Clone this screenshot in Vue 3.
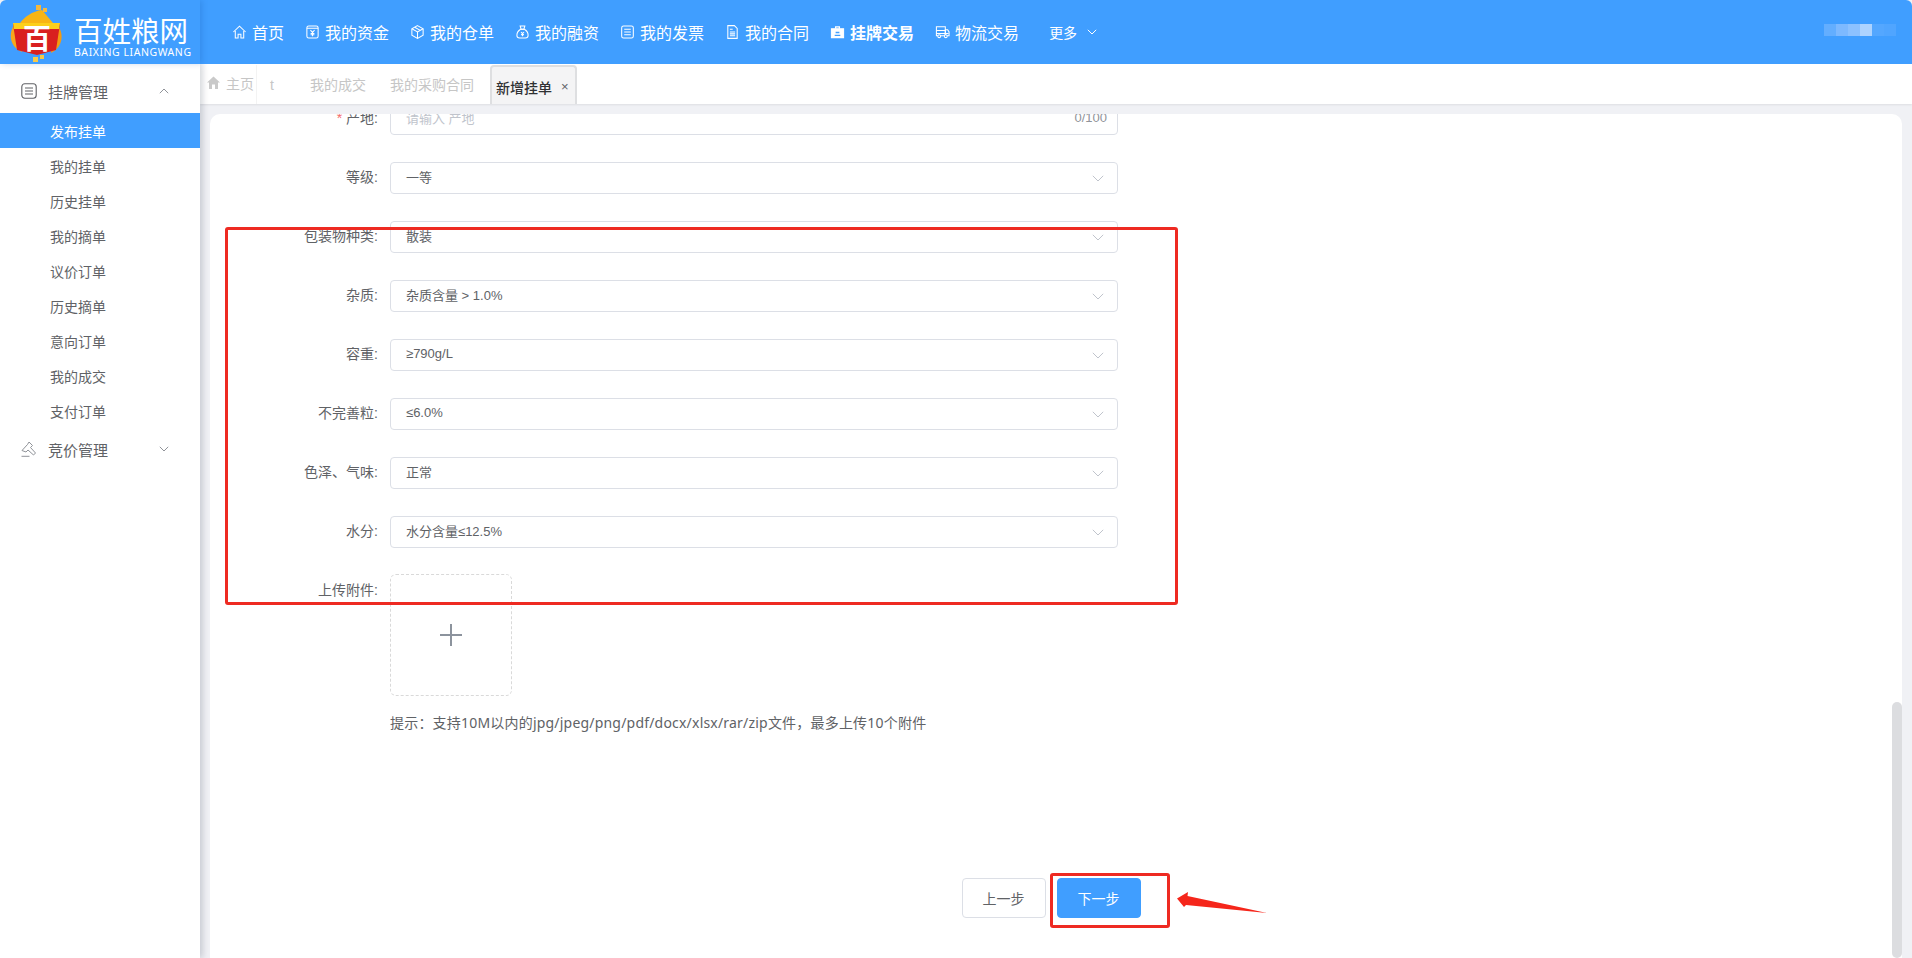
<script setup>
const navItems = [
  { label: '首页', icon: 'home' },
  { label: '我的资金', icon: 'money' },
  { label: '我的仓单', icon: 'cube' },
  { label: '我的融资', icon: 'bag' },
  { label: '我的发票', icon: 'list' },
  { label: '我的合同', icon: 'doc' },
  { label: '挂牌交易', icon: 'badge', active: true },
  { label: '物流交易', icon: 'truck' }
]
const subMenu = ['发布挂单', '我的挂单', '历史挂单', '我的摘单', '议价订单', '历史摘单', '意向订单', '我的成交', '支付订单']
const selects = [
  { label: '等级', value: '一等' },
  { label: '包装物种类', value: '散装' },
  { label: '杂质', value: '杂质含量 > 1.0%' },
  { label: '容重', value: '≥790g/L' },
  { label: '不完善粒', value: '≤6.0%' },
  { label: '色泽、气味', value: '正常' },
  { label: '水分', value: '水分含量≤12.5%' }
]
const mosaic = ['#63aeff', '#7db9ff', '#8cc1ff', '#add3ff', '#54a7ff', '#50a5ff']
</script>

<template>
  <div class="page">
    <header class="topbar">
      <div class="brand">
        <svg class="brand-mark" width="56" height="60" viewBox="0 0 56 60">
          <path d="M5 22C-1 32 1 44 13 49L10 22Z" fill="#f7a81b" />
          <path d="M47 20C56 30 54 44 42 50L46 22Z" fill="#f39a12" />
          <path d="M10 22C14 14 24 8 33 7L44 20Z" fill="#f8b514" />
          <path d="M4 21H51L47 47L28 52L8 47Z" fill="#d9201f" />
          <path d="M4 20H51L50 26H5Z" fill="#fccf1a" />
          <rect x="27" y="2" width="5" height="5" fill="#f5b83d" />
          <rect x="34" y="5" width="4" height="4" fill="#f5b83d" />
          <rect x="24" y="54" width="5" height="5" fill="#f7c948" />
          <rect x="31" y="52" width="4" height="4" fill="#f7c948" />
          <text x="28" y="46" text-anchor="middle" class="mark-glyph">百</text>
        </svg>
        <div class="brand-text">
          <div class="brand-cn">百姓粮网</div>
          <div class="brand-en">BAIXING LIANGWANG</div>
        </div>
      </div>
      <nav class="nav">
        <a v-for="item in navItems" :key="item.label" class="nav-item" :class="{ active: item.active }">
          <svg class="nav-icon" width="15" height="16" viewBox="0 0 16 16" fill="none" stroke="#fff" stroke-width="1.1">
            <template v-if="item.icon === 'home'">
              <path d="M1.500 8 8 1.800 14.500 8" />
              <path d="M3.500 7v7.500h3v-4h3v4h3V7" />
            </template>
            <template v-else-if="item.icon === 'money'">
              <rect x="2" y="1.500" width="12" height="13" rx="2" />
              <path d="M2 4h12M5.800 6 8 8.400 10.200 6M8 8.400V12.500M6 9.500h4M6 11h4" />
            </template>
            <template v-else-if="item.icon === 'cube'">
              <path d="M8 1.200 14 4.500v7L8 14.800 2 11.500v-7Z" />
              <path d="M2 4.500 8 8l6-3.500M8 8v6.800M5 2.900l6 3.400" />
            </template>
            <template v-else-if="item.icon === 'bag'">
              <path d="M5.500 1.500h5L9.500 5h-3Z" />
              <path d="M6 5C3.500 6.500 2 9 2 11.500 2 13.500 3.500 14.500 5 14.500h6c1.500 0 3-1 3-3C14 9 12.500 6.500 10 5Z" />
              <path d="M6.400 8 8 9.800 9.600 8M8 9.800V12.500M6.500 10.800h3" />
            </template>
            <template v-else-if="item.icon === 'list'">
              <rect x="1.800" y="1.500" width="12.400" height="13" rx="2" />
              <path d="M4.500 5h7M4.500 8h7M4.500 11h7" />
            </template>
            <template v-else-if="item.icon === 'doc'">
              <path d="M3 1.200h7l3 3v10.600H3Z" />
              <path d="M5.200 5h3M5.200 8h5.600M5.200 10h5.600M5.200 12h5.600" />
            </template>
            <template v-else-if="item.icon === 'badge'">
              <path d="M1.500 4.500h13v9.500h-13Z" fill="#fff" />
              <path d="M6 4.500V2.500h4v2" stroke-width="1.400" />
              <path d="M5 11.500h6M6 8.500h4" stroke="#409eff" stroke-width="1.400" />
            </template>
            <template v-else>
              <path d="M1.500 2.500h9.500v9.500h-9.500Z" />
              <path d="M11 5.500h2.500l1.500 2.500v4h-4Z" />
              <path d="M1.500 6.500h9.500M1.500 9.500h13" />
              <circle cx="4.500" cy="12.500" r="1.500" fill="#409eff" stroke="#fff" />
              <circle cx="11.500" cy="12.500" r="1.500" fill="#409eff" stroke="#fff" />
            </template>
          </svg>
          <span>{{ item.label }}</span>
        </a>
        <a class="nav-more">
          <span>更多</span>
          <svg width="10" height="6" viewBox="0 0 10 6" fill="none" stroke="#fff"><path d="M.8.800 5 5 9.200.800" /></svg>
        </a>
      </nav>
      <div class="user" aria-hidden="true">
        <i v-for="(c, i) in mosaic" :key="i" class="pixel" :style="{ background: c }"></i>
      </div>
    </header>

    <div class="body">
      <aside class="sidebar">
        <div class="group group-first">
          <svg class="group-icon" width="16" height="16" viewBox="0 0 16 16" fill="none" stroke="#606266" stroke-width="1.100">
            <rect x=".8" y=".8" width="14.400" height="14.400" rx="3" />
            <path d="M4 5h8M4 8h8M4 11h8" />
          </svg>
          <span class="group-label">挂牌管理</span>
          <svg class="chev" width="10" height="6" viewBox="0 0 10 6" fill="none" stroke="#909399"><path d="M.8 5.200 5 1l4.200 4.200" /></svg>
        </div>
        <div v-for="(m, i) in subMenu" :key="m" class="sub" :class="{ current: i === 0 }">{{ m }}</div>
        <div class="group group-last">
          <svg class="group-icon" width="16" height="16" viewBox="0 0 16 16" fill="none" stroke="#909399" stroke-width="1">
            <path d="M1 9.500 6.500 3.500 8 1l3.500 3.500-2 2 5 5.500-2 2-5.500-5-2 2Z" />
            <path d="M.5 15.300h8" />
          </svg>
          <span class="group-label">竞价管理</span>
          <svg class="chev" width="10" height="6" viewBox="0 0 10 6" fill="none" stroke="#909399"><path d="M.8.800 5 5 9.200.800" /></svg>
        </div>
      </aside>

      <main class="main">
        <div class="tabs">
          <div class="tab-home">
            <svg width="13" height="13" viewBox="0 0 13 13" fill="#c9c9c9"><path d="M6.500.5 13 6.500h-2V13H8V8.500H5V13H2V6.500H0Z" /></svg>
            <span>主页</span>
          </div>
          <div class="tab tab-t">t</div>
          <div class="tab tab-a">我的成交</div>
          <div class="tab tab-b">我的采购合同</div>
          <div class="tab-active">
            <span>新增挂单</span>
            <span class="tab-close">×</span>
          </div>
        </div>

        <section class="card">
          <div class="form">
            <div class="row">
              <label class="label"><em>*</em> 产地:</label>
              <div class="field">
                <span class="value placeholder">请输入 产地</span>
                <span class="value count">0/100</span>
              </div>
            </div>
            <div v-for="s in selects" :key="s.label" class="row">
              <label class="label">{{ s.label }}:</label>
              <div class="field">
                <span class="value">{{ s.value }}</span>
                <svg class="select-arrow" width="12" height="7" viewBox="0 0 12 7" fill="none" stroke="#c0c4cc"><path d="M.8.800 6 6l5.200-5.200" /></svg>
              </div>
            </div>
            <div class="row row-upload">
              <label class="label">上传附件:</label>
              <div class="upload">
                <svg width="24" height="24" viewBox="0 0 24 24" stroke="#8c939d" stroke-width="2"><path d="M12 1v22M1 12h22" /></svg>
              </div>
            </div>
            <p class="hint">提示：支持10M以内的jpg/jpeg/png/pdf/docx/xlsx/rar/zip文件，最多上传10个附件</p>
            <div class="actions">
              <button class="btn">上一步</button>
              <button class="btn primary">下一步</button>
            </div>
          </div>
          <div class="scroll-thumb"></div>
        </section>
      </main>
    </div>

    <div class="mark mark-form"></div>
    <div class="mark mark-next"></div>
    <svg class="mark-arrow" width="92" height="24" viewBox="0 0 92 24">
      <path d="M0 7.500 11 1 10.500 5 90 22 9 14 7 16Z" fill="#f5261b" />
    </svg>
  </div>
</template>

<style>
html, body { margin: 0; background: #fff; }
</style>

<style scoped>
.page {
  position: relative;
  width: 1912px;
  height: 958px;
  overflow: hidden;
  display: flex;
  flex-direction: column;
  background: #f0f1f5;
  font-family: "Liberation Sans", "Noto Sans CJK SC", sans-serif;
  color: #606266;
}
.topbar {
  flex: 0 0 64px;
  display: flex;
  align-items: center;
  background: #409eff;
  border-radius: 6px 6px 0 0;
  color: #fff;
  position: relative;
  z-index: 3;
}
.brand {
  width: 200px;
  height: 64px;
  flex: none;
  display: flex;
  align-items: center;
  box-shadow: 2px 0 6px rgba(0, 60, 140, .18);
}
.brand-mark { margin: 2px 7px 0 9px; flex: none; }
.mark-glyph { font: 700 28px "Noto Sans CJK SC", sans-serif; fill: #fff; }
.brand-text { color: #fff; margin-left: 2px; padding-top: 9px; }
.brand-cn { font: 400 28.500px/28px "Noto Sans CJK SC", sans-serif; white-space: nowrap; }
.brand-en { font: 10.500px/12px "Noto Sans", sans-serif; letter-spacing: .55px; white-space: nowrap; margin-top: 2px; }
.nav {
  display: flex;
  align-items: center;
  margin-left: 32px;
  font-size: 16px;
}
.nav-item {
  margin-right: 21px;
  display: flex;
  align-items: center;
  gap: 5px;
  white-space: nowrap;
}
.nav-item.active { font-weight: 700; }
.nav-icon { flex: none; }
.nav-more {
  display: flex;
  align-items: center;
  gap: 10px;
  margin-left: 9px;
  font-size: 14px;
}
.user { display: flex; margin-left: auto; margin-right: 16px; margin-top: -4px; }
.pixel { display: block; width: 12px; height: 12px; }
.body { flex: 1; display: flex; min-height: 0; }
.sidebar {
  width: 200px;
  flex: none;
  background: #fff;
  box-shadow: 3px 0 6px rgba(0, 21, 41, .16);
  position: relative;
  z-index: 2;
  padding-top: 5px;
  box-sizing: border-box;
}
.group {
  height: 44px;
  display: flex;
  align-items: center;
  padding-left: 21px;
  font-size: 15px;
  color: #606266;
}
.group-last { height: 42px; }
.group-icon { flex: none; }
.group-label { margin-left: 11px; }
.chev { margin-left: auto; margin-right: 31px; }
.sub {
  height: 35px;
  line-height: 38px;
  padding-left: 50px;
  font-size: 14px;
  color: #606266;
}
.sub.current { background: #409eff; color: #fff; }
.main { flex: 1; min-width: 0; display: flex; flex-direction: column; }
.tabs {
  flex: 0 0 40px;
  box-sizing: border-box;
  display: flex;
  align-items: flex-end;
  background: #fff;
  font-size: 14px;
  color: #c6c6c6;
  box-shadow: 0 1px 2px rgba(0, 0, 0, .08);
  position: relative;
  z-index: 1;
}
.tab-home {
  width: 57px;
  height: 39px;
  flex: none;
  display: flex;
  align-items: center;
  box-sizing: border-box;
  padding-left: 7px;
  gap: 6px;
  border-right: 1px solid #f3f3f3;
  padding-bottom: 4px;
}
.tab {
  height: 39px;
  line-height: 41px;
  flex: none;
  white-space: nowrap;
  box-sizing: border-box;
}
.tab-t { width: 40px; padding-left: 13px; }
.tab-a { width: 93px; padding-left: 13px; }
.tab-b { width: 100px; }
.tab-active {
  width: 87px;
  height: 39px;
  box-sizing: border-box;
  flex: none;
  display: flex;
  align-items: center;
  padding-left: 4px;
  padding-top: 2px;
  gap: 9px;
  color: #303133;
  font-weight: 500;
  background: #f4f4f5;
  border: 2px solid #dedfe1;
  border-bottom: 0;
  border-radius: 4px 4px 0 0;
  white-space: nowrap;
}
.tab-close { font-size: 13px; color: #606266; font-weight: 400; }
.card {
  position: relative;
  flex: 1;
  min-height: 0;
  margin: 10px 10px 0;
  background: #fff;
  border-radius: 10px 10px 0 0;
  overflow: hidden;
}
.form { margin-top: -11px; width: 1682px; font-size: 13px; }
.row { display: flex; align-items: center; margin-bottom: 27px; }
.row-upload { align-items: flex-start; margin-top: -1px; margin-bottom: 0; }
.label {
  width: 168px;
  margin-right: 12px;
  margin-bottom: 4px;
  flex: none;
  text-align: right;
  color: #606266;
  white-space: nowrap;
  font-size: 14px;
}
.label em { color: #f56c6c; font-style: normal; }
.row-upload .label { line-height: 32px; margin-bottom: 0; }
.field {
  width: 728px;
  height: 32px;
  box-sizing: border-box;
  flex: none;
  display: flex;
  align-items: center;
  justify-content: space-between;
  padding: 0 15px;
  background: #fff;
  border: 1px solid #dcdfe6;
  border-radius: 4px;
  color: #606266;
}
.value { margin-bottom: 3px; }
.placeholder { color: #c0c4cc; }
.count { color: #909399; margin-right: -5px; }
.select-arrow { margin-right: -2px; }
.upload {
  width: 122px;
  height: 122px;
  box-sizing: border-box;
  display: flex;
  align-items: center;
  justify-content: center;
  border: 1px dashed #d9d9d9;
  border-radius: 6px;
}
.hint {
  margin: 17px 0 0 180px;
  color: #606266;
  white-space: nowrap;
  font: 14px/20px "Noto Sans", "Noto Sans CJK SC", sans-serif;
  letter-spacing: .2px;
}
.actions {
  display: flex;
  justify-content: center;
  gap: 11px;
  margin-top: 145px;
}
.btn {
  width: 84px;
  height: 40px;
  font: 14px "Liberation Sans", "Noto Sans CJK SC", sans-serif;
  color: #606266;
  background: #fff;
  border: 1px solid #dcdfe6;
  border-radius: 4px;
  padding: 0;
}
.btn.primary { color: #fff; background: #409eff; border-color: #409eff; }
.scroll-thumb {
  position: absolute;
  right: 0;
  bottom: 0;
  width: 10px;
  height: 256px;
  background: #dcdde0;
  border-radius: 5px;
}
.mark {
  position: absolute;
  box-sizing: border-box;
  border: 3px solid #ee2a22;
  border-radius: 3px;
  z-index: 4;
}
.mark-form { left: 225px; top: 227px; width: 953px; height: 378px; }
.mark-next { left: 1050px; top: 873px; width: 120px; height: 55px; }
.mark-arrow { position: absolute; left: 1177px; top: 891px; z-index: 4; }
</style>
